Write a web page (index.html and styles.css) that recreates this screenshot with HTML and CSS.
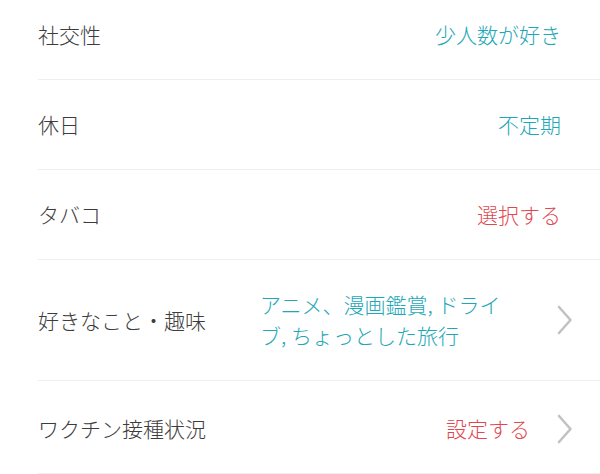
FILE: index.html
```html
<!DOCTYPE html>
<html lang="ja">
<head>
<meta charset="utf-8">
<link rel="stylesheet" href="styles.css">
</head>
<body>
<ul class="list">
  <li class="row">
    <span class="label">社交性</span>
    <span class="value teal">少人数が好き</span>
  </li>
  <li class="row">
    <span class="label">休日</span>
    <span class="value teal">不定期</span>
  </li>
  <li class="row">
    <span class="label">タバコ</span>
    <span class="value red">選択する</span>
  </li>
  <li class="row has-arrow">
    <span class="label">好きなこと・趣味</span>
    <span class="value teal multi">アニメ、漫画鑑賞, ドライブ, ちょっとした旅行</span>
    <svg class="chev" viewBox="0 0 16 30" aria-hidden="true"><path d="M2 2 L13.5 15 L2 28"/></svg>
  </li>
  <li class="row has-arrow">
    <span class="label">ワクチン接種状況</span>
    <span class="value red">設定する</span>
    <svg class="chev" viewBox="0 0 16 30" aria-hidden="true"><path d="M2 2 L13.5 15 L2 28"/></svg>
  </li>
</ul>
</body>
</html>
```

FILE: styles.css
```css
html, body {
  margin: 0;
  padding: 0;
  background: #ffffff;
}

body {
  font-family: "Noto Sans CJK JP", "Noto Sans", sans-serif;
  font-size: 21px;
  font-weight: 300;
  line-height: 31px;
  color: #3a3a3a;
  overflow: hidden;
}

.list {
  list-style: none;
  margin: -10px 0 0 38px;
  padding: 0;
}

.row {
  display: flex;
  align-items: center;
  padding: 29px 39px 29px 0;
  border-bottom: 1px solid #efefef;
}

.row.has-arrow {
  padding-right: 27px;
}

.row.has-arrow:last-child {
  padding-top: 32px;
}

.label {
  flex: none;
  color: #3c3c3c;
}

.value {
  margin-left: auto;
  text-align: left;
}

.value.multi {
  max-width: 250px;
}

.has-arrow .value {
  margin-right: 27px;
}

.has-arrow .value.multi {
  margin-right: 47px;
}

.teal {
  color: #1ea7b6;
}

.red {
  color: #e1474f;
}

.chev {
  flex: none;
  width: 16px;
  height: 30px;
}

.chev path {
  fill: none;
  stroke: #c2c2c2;
  stroke-width: 2.6;
  stroke-linecap: round;
  stroke-linejoin: round;
}
```
